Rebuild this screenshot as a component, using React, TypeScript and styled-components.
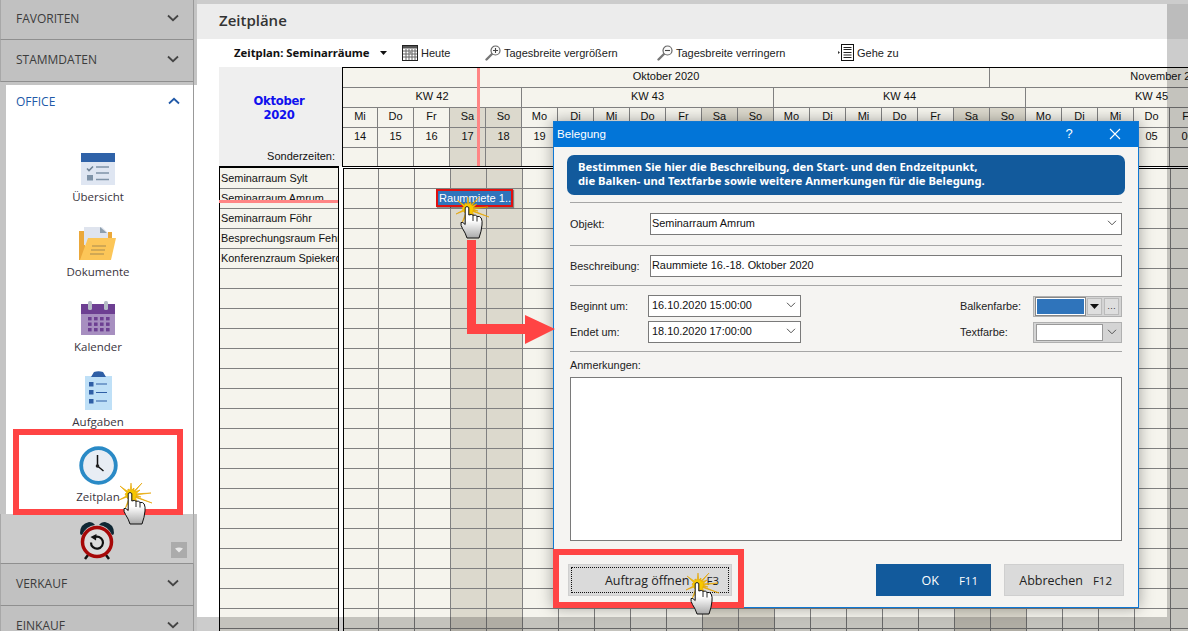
import React from 'react';
import styled, { createGlobalStyle } from 'styled-components';

const Global = createGlobalStyle`
  html, body { margin: 0; padding: 0; background: #fff; }
  * { box-sizing: border-box; }
`;

const UI = `"Liberation Sans", "Noto Sans", sans-serif`;
const BOLD = `"Noto Sans", "Liberation Sans", sans-serif`;
const SEGOE = `"Open Sans", "Noto Sans", sans-serif`;

const Page = styled.div`
  position: relative;
  width: 1188px;
  height: 631px;
  overflow: hidden;
  display: flex;
  font-family: ${UI};
  font-size: 11px;
  color: #111;
  background: #fff;
`;

/* ---------- sidebar ---------- */
const Sidebar = styled.aside`
  width: 197px;
  flex: none;
  height: 100%;
  display: flex;
  flex-direction: column;
  background: #c4c4c4;
`;
const SectionRow = styled.div<{ $h: number }>`
  height: ${p => p.$h}px;
  width: 194px;
  flex: none;
  display: flex;
  align-items: center;
  justify-content: space-between;
  padding: 0 14px 3px 15px;
  background: #c1c1c1;
  border-bottom: 1px solid #8f8f8f;
  border-right: 1px solid #999;
  border-left: 1px solid #a8a8a8;
  font: 500 12px ${SEGOE};
  color: #3c3c3c;
`;
const Gap = styled.div`
  height: 3px;
  width: 194px;
  flex: none;
  background: #c4c4c4;
  border-right: 1px solid #999;
`;
const OfficePanel = styled.div`
  margin-left: 6px;
  height: 429px;
  flex: none;
  background: #fff;
  position: relative;
  display: flex;
  flex-direction: column;
  &::after {
    content: '';
    position: absolute;
    left: 187px;
    top: 0;
    bottom: 0;
    width: 1px;
    background: #999;
  }
`;
const OfficeHead = styled.div`
  height: 33px;
  flex: none;
  display: flex;
  align-items: center;
  justify-content: space-between;
  padding: 0 14px 1px 10px;
  width: 188px;
  font: 500 12px ${SEGOE};
  color: #2159a8;
`;
const NavList = styled.div`
  padding-top: 21px;
  display: flex;
  flex-direction: column;
`;
const NavItem = styled.div`
  height: 75px;
  width: 184px;
  display: flex;
  flex-direction: column;
  align-items: center;
  font: 11.5px ${SEGOE};
  color: #3a3440;
  gap: 4px;
`;
const NavIcon = styled.div`
  height: 46px;
  width: 44px;
  display: flex;
  align-items: flex-end;
  justify-content: center;
`;
const AlarmZone = styled.div`
  height: 50px;
  width: 194px;
  flex: none;
  position: relative;
  display: flex;
  justify-content: center;
  padding: 7px 0 0 0;
  background: #cbcbcb;
  border-right: 1px solid #a8a8a8;
  border-left: 1px solid #a8a8a8;
  border-bottom: 1px solid #8f8f8f;
`;
const CollapseBtn = styled.div`
  position: absolute;
  left: 170px;
  top: 28px;
  width: 16px;
  height: 16px;
  background: #ababab;
  display: flex;
  align-items: center;
  justify-content: center;
`;

/* ---------- main ---------- */
const Main = styled.main`
  flex: 1;
  min-width: 0;
  height: 100%;
  padding-top: 4px;
  display: flex;
  flex-direction: column;
  overflow: hidden;
`;
const TitleBand = styled.div`
  height: 35px;
  flex: none;
  background: #ececec;
  padding: 0 0 3px 22px;
  display: flex;
  align-items: center;
  font: 600 15px ${SEGOE};
  color: #333;
`;
const Toolbar = styled.div`
  height: 28px;
  flex: none;
  display: flex;
  align-items: center;
  padding: 0 0 1px 37px;
  white-space: nowrap;
  color: #222;
`;
const ToolItem = styled.div<{ $w: number; $bold?: boolean }>`
  width: ${p => p.$w}px;
  flex: none;
  display: flex;
  align-items: center;
  gap: 3px;
  font: ${p => (p.$bold ? `700 11.3px ${BOLD}` : `400 11px ${UI}`)};
  color: ${p => (p.$bold ? '#111' : '#222')};
`;
const Schedule = styled.div`
  display: flex;
  margin-left: 22px;
  width: 1400px;
  flex: none;
`;
const LeftCol = styled.div`
  width: 123px;
  flex: none;
`;
const LeftHead = styled.div`
  height: 99px;
  background: #efefef;
  position: relative;
  display: flex;
  flex-direction: column;
  align-items: stretch;
`;
const MonthTitle = styled.div`
  margin-top: 27px;
  width: 120px;
  text-align: center;
  font: 700 11.6px/14px "DejaVu Sans", "Noto Sans", sans-serif;
  letter-spacing: -0.3px;
  color: #1010ee;
`;
const SonderLabel = styled.div`
  margin-top: auto;
  padding: 0 7px 2px 0;
  line-height: 15px;
  font-size: 11px;
  text-align: right;
  color: #111;
`;
const RoomList = styled.div`
  width: 120px;
  border-top: 2px solid #000;
  border-left: 1px solid #000;
  border-right: 1px solid #000;
  padding-top: 1px;
  background: #f5f4ed;
`;
const RoomRow = styled.div`
  height: 20px;
  padding: 0 0 1px 1px;
  line-height: 18px;
  white-space: nowrap;
  overflow: hidden;
  font-size: 10.9px;
  border-bottom: 1px solid #808080;
`;
const TimeCol = styled.div`
  flex: none;
`;
const HeadGrid = styled.div<{ $n: number }>`
  display: grid;
  grid-template-columns: 35px repeat(${p => p.$n - 1}, 36px);
  grid-template-rows: 20px 20px 20px 20px 18px;
  border-top: 1px solid #000;
  border-left: 1px solid #000;
  border-bottom: 1px solid #000;
  background: #f5f4ed;
`;
const HCell = styled.div<{ $span?: number; $we?: boolean; $plain?: boolean }>`
  grid-column: span ${p => p.$span ?? 1};
  display: flex;
  align-items: center;
  justify-content: center;
  padding-bottom: 3px;
  background: ${p => (p.$we ? '#dcd9cd' : '#f5f4ed')};
  border-right: 1px solid #808080;
  border-bottom: ${p => (p.$plain ? 'none' : '1px solid #808080')};
  white-space: nowrap;
  font-size: 11px;
`;
const BodyGrid = styled.div<{ $n: number }>`
  display: grid;
  grid-template-columns: 35px repeat(${p => p.$n - 1}, 36px);
  grid-auto-rows: 20px;
  margin: 1px 0 0 1px;
  border-top: 1px solid #000;
  border-left: 1px solid #000;
  background: #f5f4ed;
`;
const BCell = styled.div<{ $we?: boolean }>`
  background: ${p => (p.$we ? '#dcd9cd' : '#f5f4ed')};
  border-right: 1px solid #808080;
  border-bottom: 1px solid #808080;
`;

/* ---------- overlays ---------- */
const Shade = styled.div<{ $l: number; $t: number; $w: number; $h: number }>`
  position: absolute;
  left: ${p => p.$l}px;
  top: ${p => p.$t}px;
  width: ${p => p.$w}px;
  height: ${p => p.$h}px;
  background: rgba(0, 0, 0, 0.2);
  z-index: 3;
`;
const PinkLine = styled.div<{ $l: number; $t: number; $w: number; $h: number }>`
  position: absolute;
  left: ${p => p.$l}px;
  top: ${p => p.$t}px;
  width: ${p => p.$w}px;
  height: ${p => p.$h}px;
  background: #ff8585;
  z-index: 2;
`;
const EventBar = styled.div`
  position: absolute;
  left: 436px;
  top: 189px;
  width: 77px;
  height: 18px;
  border: 2px solid #e01010;
  background: #2f74bb;
  color: #fff;
  font-size: 11.1px;
  line-height: 14px;
  padding-left: 1px;
  white-space: nowrap;
  overflow: hidden;
  box-shadow: 1px 1px 1px rgba(0, 0, 0, 0.4);
  z-index: 2;
`;
const RedBox = styled.div<{ $l: number; $t: number; $w: number; $h: number }>`
  position: absolute;
  left: ${p => p.$l}px;
  top: ${p => p.$t}px;
  width: ${p => p.$w}px;
  height: ${p => p.$h}px;
  border: 6px solid #ff4444;
  z-index: 6;
`;
const Free = styled.div<{ $l: number; $t: number }>`
  position: absolute;
  left: ${p => p.$l}px;
  top: ${p => p.$t}px;
  z-index: 7;
  line-height: 0;
`;

/* ---------- dialog ---------- */
const Dialog = styled.section`
  position: absolute;
  left: 553px;
  top: 121px;
  width: 586px;
  height: 487px;
  border: 1px solid #0f78d4;
  background: #f5f4f2;
  box-shadow: 0 0 14px rgba(0, 0, 0, 0.35);
  z-index: 5;
  display: flex;
  flex-direction: column;
`;
const DialogTitle = styled.header`
  height: 25px;
  flex: none;
  background: #0275d8;
  color: #fff;
  display: flex;
  align-items: center;
  padding: 0 0 2px 3px;
  font: 11.6px ${UI};
`;
const TitleGrow = styled.span`
  flex: 1;
`;
const TitleBtn = styled.span<{ $w: number }>`
  width: ${p => p.$w}px;
  display: flex;
  justify-content: center;
  font-size: 13px;
`;
const Banner = styled.div`
  margin: 8px 13px 0;
  height: 40px;
  flex: none;
  border-radius: 7px;
  background: #125a9c;
  color: #fff;
  padding: 5px 0 0 11px;
  font: 700 11.25px/14px ${BOLD};
  white-space: nowrap;
`;
const FormBody = styled.div`
  padding: 0 16px;
  display: flex;
  flex-direction: column;
  flex: none;
`;
const Sep = styled.div<{ $mt: number }>`
  height: 1px;
  margin-top: ${p => p.$mt}px;
  background: #a6a6a6;
`;
const FieldRow = styled.div<{ $mt: number }>`
  margin-top: ${p => p.$mt}px;
  display: flex;
  align-items: center;
  height: 22px;
  font-size: 10.9px;
`;
const Label = styled.label<{ $w: number }>`
  width: ${p => p.$w}px;
  flex: none;
  color: #222;
`;
const Input = styled.div<{ $w?: number }>`
  width: ${p => (p.$w ? `${p.$w}px` : 'auto')};
  flex: ${p => (p.$w ? 'none' : '1')};
  height: 22px;
  background: #fff;
  border: 1px solid #7a7a7a;
  display: flex;
  align-items: center;
  justify-content: space-between;
  padding: 0 4px 2px ${p => (p.$w ? 3 : 1)}px;
  white-space: nowrap;
`;
const Spacer = styled.div`
  flex: 1;
`;
const ColorBox = styled.div`
  width: 89px;
  height: 21px;
  flex: none;
  background: #d4d4d4;
  border: 1px solid #b0b0b0;
  display: flex;
  align-items: center;
  padding: 0 2px;
  gap: 2px;
`;
const Swatch = styled.div<{ $c: string; $w: number }>`
  width: ${p => p.$w}px;
  height: 17px;
  background: ${p => p.$c};
  border: 1px solid ${p => (p.$c === '#fff' ? '#999' : '#fff')};
  outline: ${p => (p.$c === '#fff' ? 'none' : '1px solid #888')};
  outline-offset: 0;
`;
const MiniBtn = styled.div`
  width: 15px;
  height: 17px;
  flex: none;
  background: #dedede;
  border: 1px solid #bbb;
  display: flex;
  align-items: center;
  justify-content: center;
  font-size: 9px;
  line-height: 8px;
  color: #333;
`;
const TextChevron = styled.div`
  flex: 1;
  display: flex;
  justify-content: center;
`;
const NoteLabel = styled.div`
  margin-top: 6px;
  height: 19px;
  line-height: 15px;
  font-size: 10.9px;
  color: #222;
`;
const Notes = styled.div`
  height: 164px;
  background: #fff;
  border: 1px solid #7a7a7a;
`;
const Footer = styled.footer`
  margin-top: 23px;
  padding: 0 14px 0 14px;
  display: flex;
  height: 32px;
  align-items: stretch;
`;
const Btn = styled.button<{ $w: number; $primary?: boolean }>`
  width: ${p => p.$w}px;
  flex: none;
  padding: 0;
  border: 1px solid ${p => (p.$primary ? '#125a9c' : '#cfcfcf')};
  background: ${p => (p.$primary ? '#125a9c' : '#dadada')};
  color: ${p => (p.$primary ? '#fff' : '#222')};
  font: 400 12.5px ${SEGOE};
  display: flex;
  align-items: center;
  justify-content: flex-end;
`;
const OpenBtn = styled(Btn)`
  padding: 2px;
`;
const Focus = styled.div`
  width: 100%;
  height: 100%;
  border: 1px dotted #111;
  display: flex;
  align-items: center;
  justify-content: flex-end;
  padding-right: 9px;
  gap: 17px;
`;
const BtnKey = styled.span`
  font-size: 11.5px;
`;
const BtnInner = styled.span<{ $gap: number; $pr: number }>`
  display: flex;
  align-items: center;
  gap: ${p => p.$gap}px;
  padding-right: ${p => p.$pr}px;
`;
const FooterGrow = styled.div`
  flex: 1;
`;
const FooterGap = styled.div`
  width: 13px;
  flex: none;
`;

/* ---------- icons ---------- */
const Chevron = ({ up, color = '#444', size = 12 }: { up?: boolean; color?: string; size?: number }) => (
  <svg width={size} height={8} viewBox="0 0 12 8" fill="none">
    <path d={up ? 'M1 6.5 6 1.8 11 6.5' : 'M1 1.5 6 6.2 11 1.5'} stroke={color} strokeWidth="1.8" />
  </svg>
);
const SmallChevron = () => (
  <svg width={10} height={6} viewBox="0 0 10 6" fill="none">
    <path d="M1 .8 5 4.8 9 .8" stroke="#555" strokeWidth="1" />
  </svg>
);
const Caret = () => (
  <svg width={7} height={4} viewBox="0 0 7 4" style={{ marginLeft: 7 }}>
    <path d="M0 0h7L3.5 4z" fill="#111" />
  </svg>
);
const Caret2 = () => (
  <svg width={9} height={5} viewBox="0 0 9 5"><path d="M0 0h9L4.500 5z" fill="#111" /></svg>
);
const OverviewIcon = () => (
  <svg width={34} height={32} viewBox="0 0 34 32">
    <rect width="34" height="32" fill="#dfe6f2" />
    <rect width="34" height="9" fill="#2f62a8" />
    <path d="M6 15.5l2 2 4-4" fill="none" stroke="#6f8396" strokeWidth="1.6" />
    <rect x="6" y="22" width="6" height="5.5" fill="#7f93a8" />
    <path d="M15 14h13M15 20h13M15 26.500h13" stroke="#7f93a8" strokeWidth="1.5" />
  </svg>
);
const FolderIcon = () => (
  <svg width={38} height={33} viewBox="0 0 38 33">
    <path d="M0 4h6v29H0z" fill="#eba83a" />
    <path d="M5 0h18l6 6v12H5z" fill="#dfe4ee" />
    <path d="M21 0l7 6h-7z" fill="#8d9fae" />
    <path d="M29 5h4v8h-4z" fill="#eba83a" />
    <path d="M9 11h28l-5 22H1z" fill="#fcc658" />
    <path d="M13 19h14M12 23h14M11 27h14" stroke="#a58a50" strokeWidth="1.2" />
  </svg>
);
const CalendarIcon = () => (
  <svg width={34} height={34} viewBox="0 0 34 34">
    <rect y="3" width="34" height="31" fill="#a78fc0" />
    <rect y="3" width="34" height="10" fill="#6d3f92" />
    <rect x="7" y="0" width="4" height="9" rx="1.5" fill="#b5bcc6" />
    <rect x="23" y="0" width="4" height="9" rx="1.5" fill="#b5bcc6" />
    {[0, 1, 2, 3].flatMap(c => [0, 1, 2].map(r => (
      <rect key={`${c}${r}`} x={7 + c * 6} y={16 + r * 5.5} width="3.6" height="3.4" fill="#6d3f92" />
    )))}
  </svg>
);
const TaskIcon = () => (
  <svg width={27} height={39} viewBox="0 0 27 39">
    <rect y="5" width="27" height="34" fill="#bfe0f7" />
    <path d="M6 6l3-5q4.500-1.500 9 0l3 5z" fill="#2f5fa6" />
    <rect x="4" y="11" width="4.500" height="4.500" fill="#2f5fa6" />
    <rect x="4" y="19" width="4.500" height="4.500" fill="#2f5fa6" />
    <rect x="4" y="28" width="4.500" height="4.500" fill="#2f5fa6" />
    <path d="M11 13h11M11 21.500h11M11 30h11" stroke="#2f5fa6" strokeWidth="1.200" />
  </svg>
);
const ClockIcon = () => (
  <svg width={39} height={39} viewBox="0 0 39 39">
    <circle cx="19.500" cy="19.500" r="17.300" fill="#e8edf4" stroke="#2a8ac6" strokeWidth="3.800" />
    <path d="M18.500 9v11l6 5" fill="none" stroke="#111" strokeWidth="1.500" />
    <circle cx="18.500" cy="20" r="1.800" fill="#222" />
  </svg>
);
const AlarmIcon = () => (
  <svg width={36} height={39} viewBox="0 0 36 39">
    <path d="M1 12Q1 3 10 1q4 0 6 3Q7 5 3 14 1 14 1 12z" fill="#0f2733" />
    <path d="M35 12Q35 3 26 1q-4 0-6 3 9 1 13 10 2 0 2-2z" fill="#0f2733" />
    <path d="M6 38l3-4M30 38l-3-4" stroke="#111" strokeWidth="2.500" />
    <circle cx="18" cy="21" r="14.500" fill="#dcdcdc" stroke="#a60808" strokeWidth="3.500" />
    <path d="M15 16.500a6 6 0 1 1-3 5" fill="none" stroke="#111" strokeWidth="2.200" />
    <path d="M17.500 13l-.5 6.500-5.500-3.500z" fill="#111" />
  </svg>
);
const DropGlyph = () => (
  <svg width={10} height={6} viewBox="0 0 10 6">
    <path d="M1 1.500Q5-.5 9 1.500L5 5.500z" fill="#e8e8e8" />
  </svg>
);
const GridIcon = () => (
  <svg width={16} height={16} viewBox="0 0 16 16">
    <rect x=".5" y=".5" width="15" height="15" fill="#fff" stroke="#222" />
    <rect x="1" y="1" width="14" height="2.500" fill="#555" />
    <path d="M4 4v11M7 4v11M10 4v11M13 4v11M1 6h14M1 9h14M1 12h14" stroke="#666" strokeWidth="1" />
    <rect x="7" y="6" width="3" height="3" fill="#999" />
  </svg>
);
const MagnifierIcon = ({ minus }: { minus?: boolean }) => (
  <svg width={16} height={16} viewBox="0 0 16 16">
    <path d="M1.500 14.500 7 9" stroke="#777" strokeWidth="2.400" strokeLinecap="round" />
    <circle cx="10.500" cy="5.500" r="4.500" fill="#fafafa" stroke="#666" strokeWidth="1.200" />
    <path d={minus ? 'M8 5.500h5' : 'M8 5.500h5M10.500 3v5'} stroke="#444" strokeWidth="1.100" />
  </svg>
);
const GotoIcon = () => (
  <svg width={16} height={17} viewBox="0 0 16 17">
    <path d="M0 7l2 1.500L0 10z" fill="#333" />
    <rect x="3.500" y=".5" width="12" height="16" fill="#fff" stroke="#111" />
    <path d="M5.500 3.500h8M5.500 5.500h8M5.500 8.500h8M5.500 11h8M5.500 13.500h8" stroke="#222" strokeWidth="1.200" />
  </svg>
);

const starPts = (() => {
  const tips: [number, number][] = [
    [32, 10], [21, 7], [23, 0], [15, 5], [12, 0], [9, 6], [1, 3], [6, 11], [0, 17], [8, 15], [6, 26], [13, 19], [18, 19], [33, 20], [22, 14],
  ];
  const cx = 12, cy = 12;
  const out: string[] = [];
  tips.forEach(([x, y], i) => {
    out.push(`${x},${y}`);
    const [nx, ny] = tips[(i + 1) % tips.length];
    const mx = (x + nx) / 2 - cx, my = (y + ny) / 2 - cy;
    const d = Math.hypot(mx, my) || 1;
    out.push(`${(cx + (mx / d) * 5).toFixed(1)},${(cy + (my / d) * 5).toFixed(1)}`);
  });
  return out.join(' ');
})();

const Pointer = ({ id }: { id: string }) => (
  <svg width={34} height={44} viewBox="0 0 34 44">
    <defs>
      <linearGradient id={id} x1="0" y1="0" x2="0" y2="1">
        <stop offset="0.45" stopColor="#fff" />
        <stop offset="1" stopColor="#a9a9a9" />
      </linearGradient>
    </defs>
    <polygon points={starPts} fill="#f7c800" stroke="#e3a000" strokeWidth=".6" />
    <g transform="translate(-1 -3)">
      <path
        d="M10.200 13.500Q12 11.500 13.800 13.500V21Q16.800 19.800 18 21.200 20.800 20.600 22 22.400 25 22 26.200 24 27.500 27 27 31 26.500 37 24 44H12Q10.500 39 7.500 34.500 5.500 31.500 6 28.500 7.500 27.500 10.200 30.500z"
        fill={`url(#${id})`}
        stroke="#111"
        strokeWidth="1"
      />
      <path d="M18 21.200V27M22 22.400V27.500" stroke="#111" strokeWidth=".9" fill="none" />
    </g>
  </svg>
);

const ArrowDrawing = () => (
  <svg width={92} height={106} viewBox="0 0 92 106">
    <path d="M2 0H11V84H60V75L90 89 60 104V94H2z" fill="#ff4444" />
  </svg>
);

/* ---------- data ---------- */
const DOW = ['Mo', 'Di', 'Mi', 'Do', 'Fr', 'Sa', 'So'];
const DAY_COUNT = 28;
const days = Array.from({ length: DAY_COUNT }, (_, i) => {
  const dow = (2 + i) % 7;
  const num = i < 18 ? String(14 + i) : String(i - 17).padStart(2, '0');
  return { name: DOW[dow], num, we: dow >= 5 };
});
const weeks = [['KW 42', 5], ['KW 43', 7], ['KW 44', 7], ['KW 45', 7], ['KW 46', 2]] as const;
const rooms = ['Seminarraum Sylt', 'Seminarraum Amrum', 'Seminarraum Föhr', 'Besprechungsraum Fehmarn', 'Konferenzraum Spiekeroog'];
const ROWS = 24;

export default function App() {
  return (
    <Page>
      <Global />
      <Sidebar>
        <SectionRow $h={40}>FAVORITEN<Chevron /></SectionRow>
        <SectionRow $h={42}>STAMMDATEN<Chevron /></SectionRow>
        <Gap />
        <OfficePanel>
          <OfficeHead>OFFICE<Chevron up color="#2159a8" /></OfficeHead>
          <NavList>
            <NavItem><NavIcon><OverviewIcon /></NavIcon>Übersicht</NavItem>
            <NavItem><NavIcon><FolderIcon /></NavIcon>Dokumente</NavItem>
            <NavItem><NavIcon><CalendarIcon /></NavIcon>Kalender</NavItem>
            <NavItem><NavIcon><TaskIcon /></NavIcon>Aufgaben</NavItem>
            <NavItem><NavIcon><ClockIcon /></NavIcon>Zeitplan</NavItem>
          </NavList>
        </OfficePanel>
        <AlarmZone>
          <AlarmIcon />
          <CollapseBtn><DropGlyph /></CollapseBtn>
        </AlarmZone>
        <SectionRow $h={42}>VERKAUF<Chevron /></SectionRow>
        <SectionRow $h={42}>EINKAUF<Chevron /></SectionRow>
      </Sidebar>

      <Main>
        <TitleBand>Zeitpläne</TitleBand>
        <Toolbar>
          <ToolItem $w={168} $bold>Zeitplan: Seminarräume<Caret /></ToolItem>
          <ToolItem $w={83}><GridIcon />Heute</ToolItem>
          <ToolItem $w={172}><MagnifierIcon />Tagesbreite vergrößern</ToolItem>
          <ToolItem $w={181}><MagnifierIcon minus />Tagesbreite verringern</ToolItem>
          <ToolItem $w={80}><GotoIcon />Gehe zu</ToolItem>
        </Toolbar>
        <Schedule>
          <LeftCol>
            <LeftHead>
              <MonthTitle>Oktober<br />2020</MonthTitle>
              <SonderLabel>Sonderzeiten:</SonderLabel>
            </LeftHead>
            <RoomList>
              {Array.from({ length: ROWS }, (_, i) => (
                <RoomRow key={i}>{rooms[i] ?? ''}</RoomRow>
              ))}
            </RoomList>
          </LeftCol>
          <TimeCol>
            <HeadGrid $n={DAY_COUNT}>
              <HCell $span={18}>Oktober 2020</HCell>
              <HCell $span={10}>November 2020</HCell>
              {weeks.map(([w, s]) => <HCell key={w} $span={s}>{w}</HCell>)}
              {days.map((d, i) => <HCell key={i} $we={d.we}>{d.name}</HCell>)}
              {days.map((d, i) => <HCell key={i} $we={d.we}>{d.num}</HCell>)}
              {days.map((d, i) => <HCell key={i} $we={d.we} $plain />)}
            </HeadGrid>
            <BodyGrid $n={DAY_COUNT}>
              {Array.from({ length: ROWS }, (_, r) =>
                days.map((d, c) => <BCell key={`${r}-${c}`} $we={d.we} />),
              )}
            </BodyGrid>
          </TimeCol>
        </Schedule>
      </Main>

      <Shade $l={197} $t={0} $w={970} $h={4} />
      <Shade $l={1167} $t={0} $w={21} $h={631} />
      <Shade $l={197} $t={617} $w={970} $h={14} />

      <PinkLine $l={477} $t={68} $w={3} $h={98} />
      <PinkLine $l={219} $t={200} $w={119} $h={3} />
      <EventBar>Raummiete 1..</EventBar>

      <Dialog>
        <DialogTitle>
          Belegung
          <TitleGrow />
          <TitleBtn $w={46}>?</TitleBtn>
          <TitleBtn $w={46}>
            <svg width={12} height={12} viewBox="0 0 12 12"><path d="M1 1l10 10M11 1 1 11" stroke="#fff" strokeWidth="1.100" /></svg>
          </TitleBtn>
        </DialogTitle>
        <Banner>
          Bestimmen Sie hier die Beschreibung, den Start- und den Endzeitpunkt,<br />
          die Balken- und Textfarbe sowie weitere Anmerkungen für die Belegung.
        </Banner>
        <FormBody>
          <Sep $mt={7} />
          <FieldRow $mt={10}>
            <Label $w={80}>Objekt:</Label>
            <Input>Seminarraum Amrum<SmallChevron /></Input>
          </FieldRow>
          <Sep $mt={10} />
          <FieldRow $mt={9}>
            <Label $w={80}>Beschreibung:</Label>
            <Input>Raummiete 16.-18. Oktober 2020</Input>
          </FieldRow>
          <Sep $mt={8} />
          <FieldRow $mt={9}>
            <Label $w={78}>Beginnt um:</Label>
            <Input $w={153}>16.10.2020 15:00:00<SmallChevron /></Input>
            <Spacer />
            <Label $w={73}>Balkenfarbe:</Label>
            <ColorBox>
              <Swatch $c="#2f74bb" $w={50} />
              <MiniBtn><Caret2 /></MiniBtn>
              <MiniBtn>…</MiniBtn>
            </ColorBox>
          </FieldRow>
          <FieldRow $mt={4}>
            <Label $w={78}>Endet um:</Label>
            <Input $w={153}>18.10.2020 17:00:00<SmallChevron /></Input>
            <Spacer />
            <Label $w={73}>Textfarbe:</Label>
            <ColorBox>
              <Swatch $c="#fff" $w={67} />
              <TextChevron><SmallChevron /></TextChevron>
            </ColorBox>
          </FieldRow>
          <Sep $mt={8} />
          <NoteLabel>Anmerkungen:</NoteLabel>
          <Notes />
        </FormBody>
        <Footer>
          <OpenBtn $w={164}>
            <Focus><span>Auftrag öffnen</span><BtnKey>F3</BtnKey></Focus>
          </OpenBtn>
          <FooterGrow />
          <Btn $w={115} $primary><BtnInner $gap={20} $pr={12}>OK<BtnKey>F11</BtnKey></BtnInner></Btn>
          <FooterGap />
          <Btn $w={120}><BtnInner $gap={10} $pr={11}>Abbrechen<BtnKey>F12</BtnKey></BtnInner></Btn>
        </Footer>
      </Dialog>

      <Free $l={465} $t={240}><ArrowDrawing /></Free>
      <RedBox $l={13} $t={429} $w={170} $h={86} />
      <RedBox $l={553} $t={549} $w={191} $h={59} />
      <Free $l={119} $t={483}><Pointer id="h1" /></Free>
      <Free $l={456} $t={197}><Pointer id="h2" /></Free>
      <Free $l={686} $t={573}><Pointer id="h3" /></Free>
    </Page>
  );
}
